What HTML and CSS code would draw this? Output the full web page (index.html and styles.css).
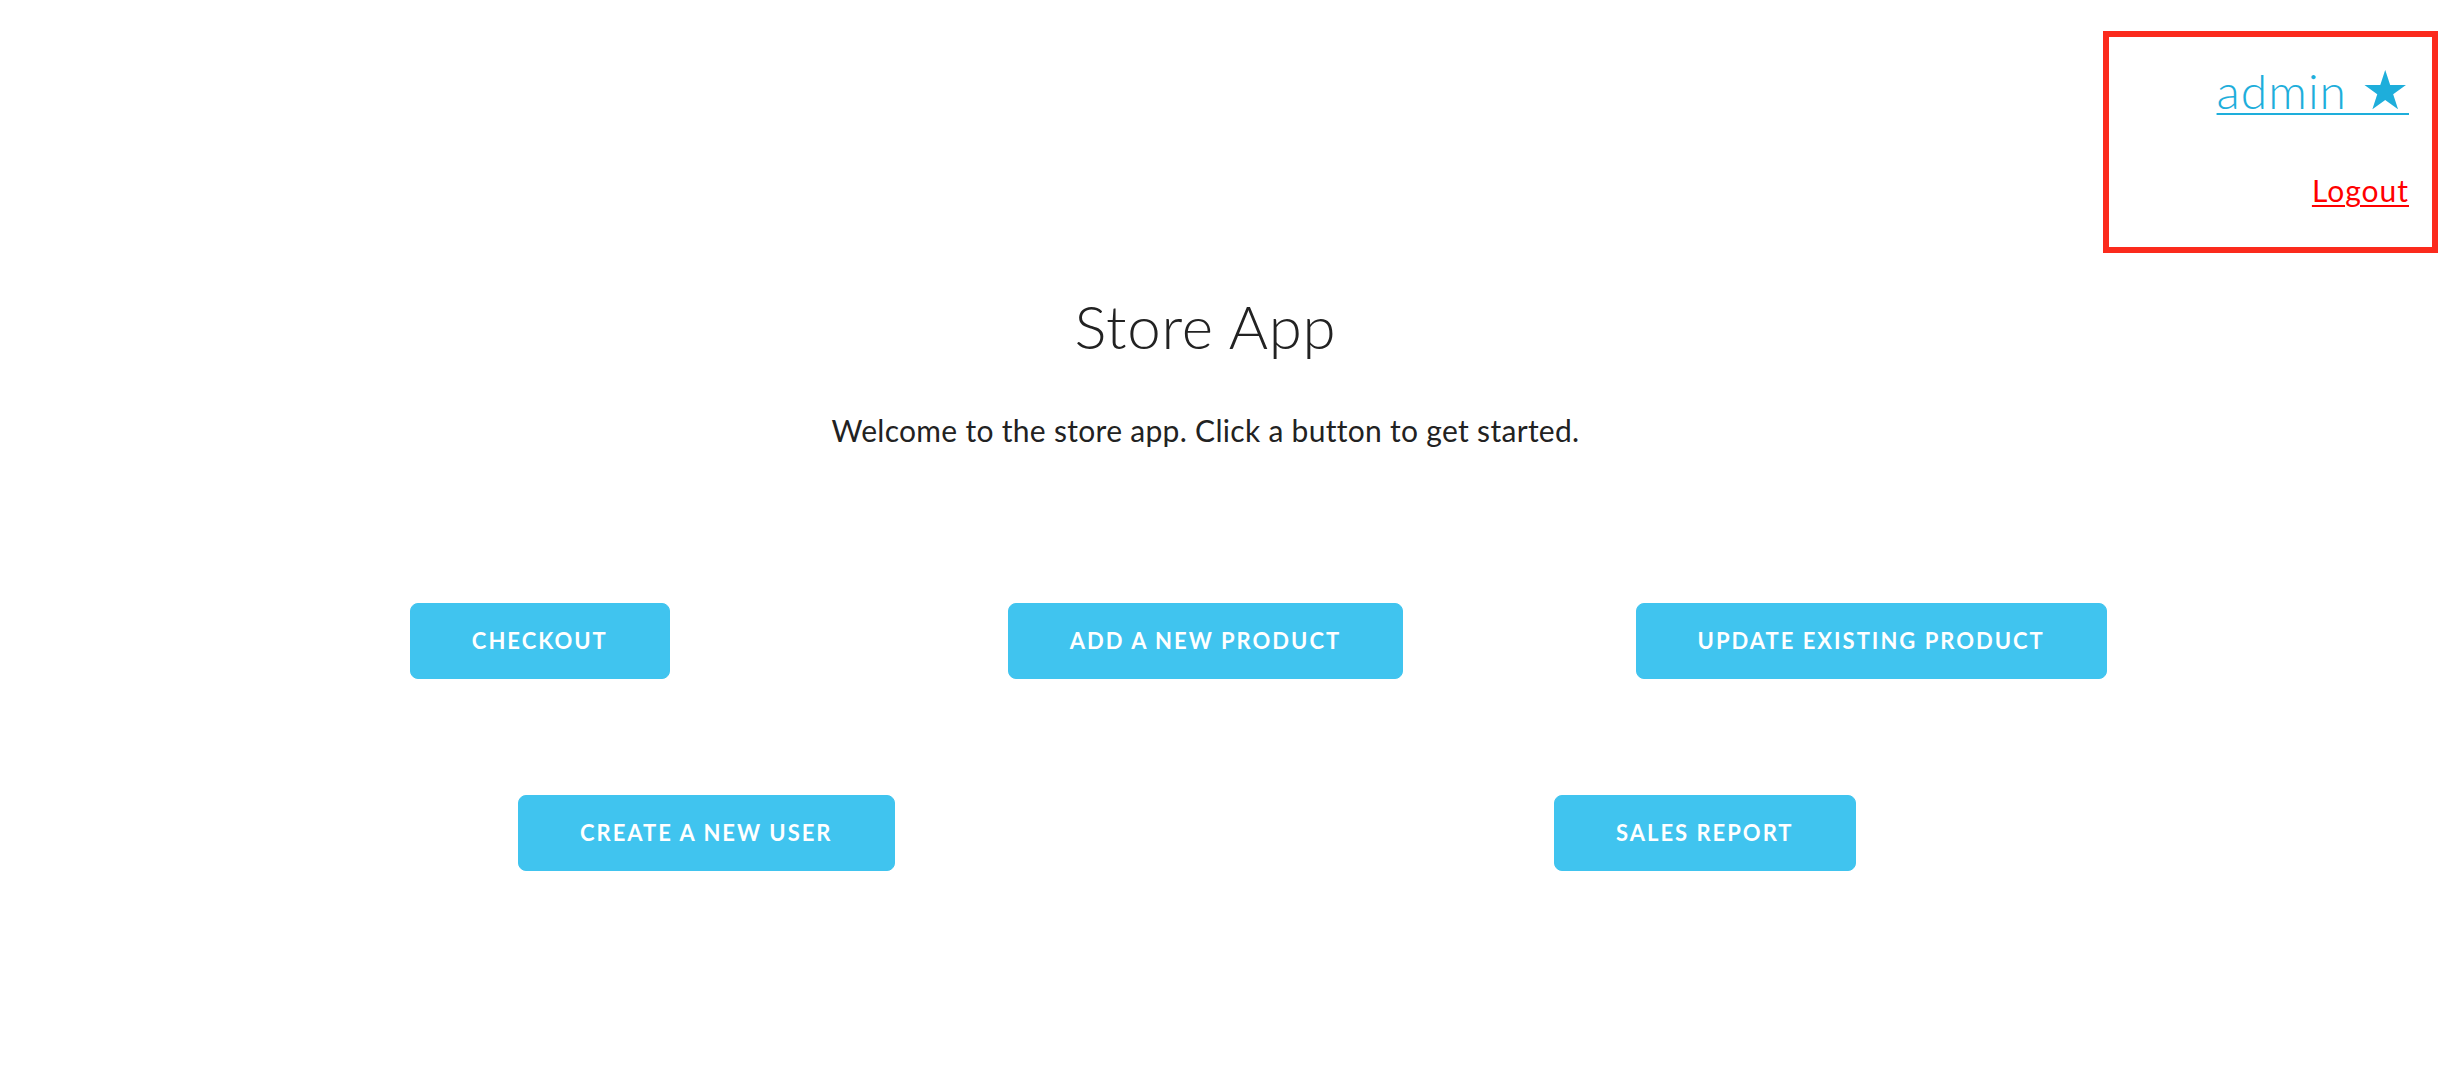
FILE: index.html
```html
<!DOCTYPE html>
<html lang="en">
<head>
<meta charset="utf-8">
<title>Store App</title>
<link rel="stylesheet" href="styles.css">
</head>
<body>
  <header class="topbar">
    <div class="account">
      <div class="account-user"><a href="#" class="user-link">admin <span class="star">★</span></a></div>
      <div class="account-logout"><a href="#" class="logout-link">Logout</a></div>
    </div>
  </header>
  <main class="container">
    <h1 class="title">Store App</h1>
    <p class="intro">Welcome to the store app. Click a button to get started.</p>
    <div class="btn-row btn-row-first">
      <div class="cell"><a href="#" class="button">Checkout</a></div>
      <div class="cell"><a href="#" class="button">Add a new product</a></div>
      <div class="cell"><a href="#" class="button">Update existing product</a></div>
    </div>
    <div class="btn-row btn-row-second">
      <div class="cell"><a href="#" class="button">Create a new user</a></div>
      <div class="cell"><a href="#" class="button">Sales report</a></div>
    </div>
  </main>
</body>
</html>
```

FILE: styles.css
```css
html, body {
  margin: 0;
  padding: 0;
  background: #ffffff;
}

body {
  font-family: "Lato", "Open Sans", "Liberation Sans", sans-serif;
  color: #222222;
  width: 2446px;
}

.topbar {
  display: flex;
  justify-content: flex-end;
  padding: 31px 8px 0 0;
  height: 222px;
}

.account {
  box-sizing: border-box;
  width: 335px;
  height: 222px;
  border: 6px solid #fb2a1d;
  padding: 25px 23px 0 0;
  text-align: right;
}

.account-user {
  font-size: 48px;
  line-height: 58px;
  font-weight: 300;
}

.user-link {
  color: #1eaedb;
  letter-spacing: 1px;
  text-decoration: underline;
  text-decoration-thickness: 2px;
  text-underline-offset: 4px;
}

.star {
  font-family: "DejaVu Sans", sans-serif;
  font-size: 54px;
  line-height: 1;
  letter-spacing: 0;
}

.account-logout {
  margin-top: 52px;
  font-size: 30px;
  line-height: 36px;
  font-weight: 400;
}

.logout-link {
  color: #ff0000;
  letter-spacing: 1px;
  text-decoration: underline;
  text-decoration-thickness: 2px;
  text-underline-offset: 3px;
}

.container {
  box-sizing: border-box;
  width: 1997px;
  margin-left: 207px;
  text-align: center;
}

.title {
  margin: 37px 0 0;
  font-size: 60px;
  line-height: 72px;
  font-weight: 300;
  letter-spacing: 0.75px;
}

.intro {
  margin: 46px 0 0;
  font-size: 30px;
  line-height: 45px;
  font-weight: 400;
  letter-spacing: 0.3px;
}

.btn-row {
  display: flex;
}

.btn-row-first {
  margin-top: 150px;
}

.btn-row-second {
  margin-top: 116px;
}

.cell {
  flex: 1 1 0;
  display: flex;
  justify-content: center;
}

.button {
  display: inline-block;
  height: 76px;
  box-sizing: border-box;
  padding: 0 61px;
  background: #40c4ef;
  border: 1px solid #40c4ef;
  border-radius: 8px;
  color: #ffffff;
  text-decoration: none;
  text-transform: uppercase;
  font-size: 22px;
  font-weight: 700;
  letter-spacing: 2px;
  line-height: 74px;
  white-space: nowrap;
}
```
